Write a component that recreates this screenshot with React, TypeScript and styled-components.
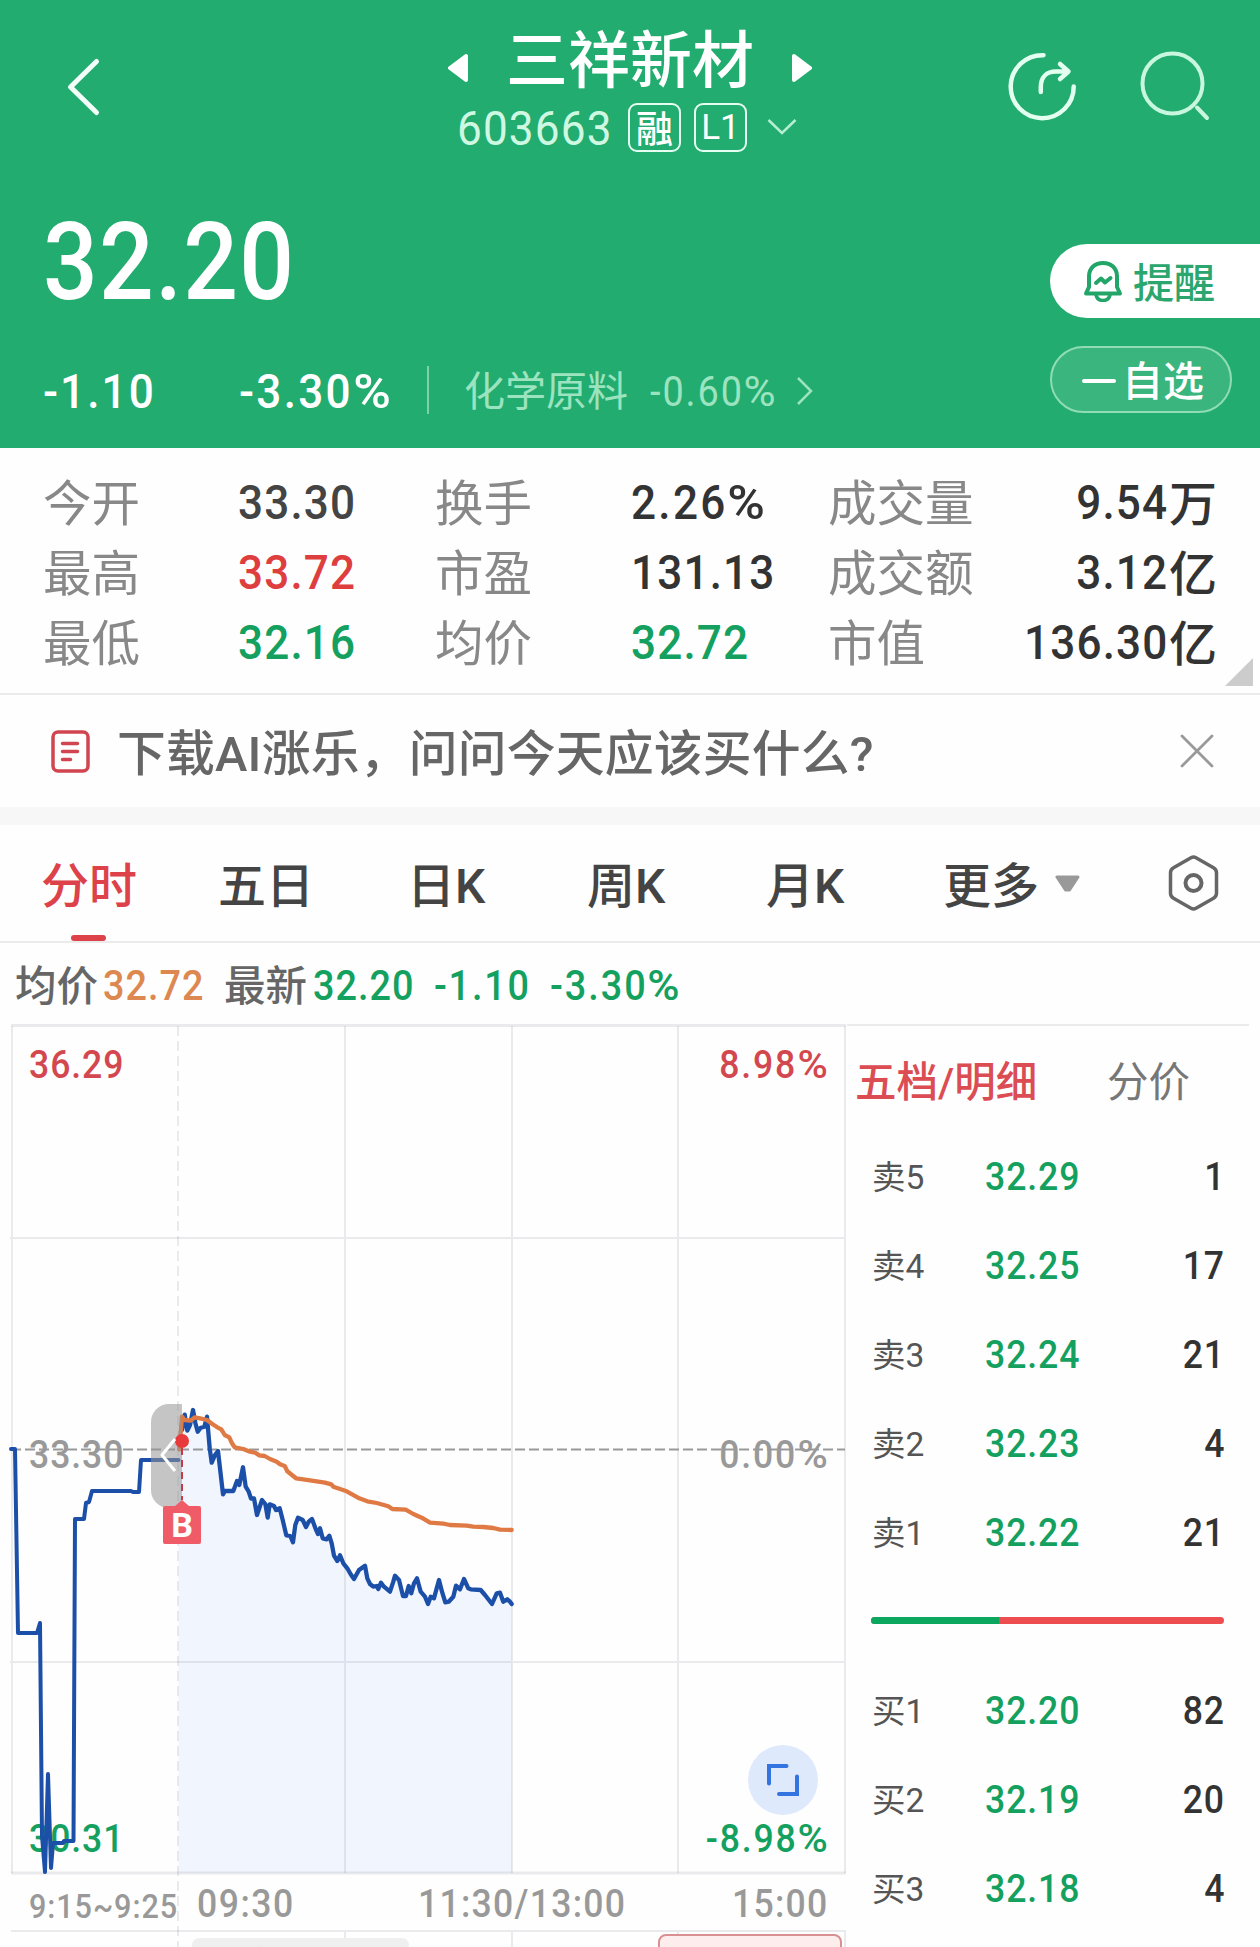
import React from "react";
import styled, { createGlobalStyle } from "styled-components";

const GREEN = "#14a05f";
const RED = "#dd4149";
const LINE = "#ebebeb";

const GlobalStyle = createGlobalStyle`
  *, *::before, *::after { box-sizing: border-box; }
  body {
    margin: 0;
    background: #fefefe;
    font-family: Roboto, "Noto Sans CJK SC", sans-serif;
    font-weight: 500;
  }
  svg { display: block; flex: none; }
`;

const Page = styled.main`
  width: 1260px;
  height: 1947px;
  overflow: hidden;
  display: flex;
  flex-direction: column;
  background: #fefefe;
  white-space: nowrap;
`;

/* Narrow, loosely tracked digits used for every quote figure. */
const Figure = styled.span<{ $track: number; $right?: boolean }>`
  display: inline-block;
  letter-spacing: ${(p) => p.$track}em;
  margin-right: ${(p) => (p.$right ? -p.$track : 0)}em;
  transform: scaleX(0.9);
  transform-origin: ${(p) => (p.$right ? "right" : "left")} center;
`;

const Percent = styled.span`
  display: inline-block;
  margin-right: 0.11em;
  transform: scaleX(1.16);
  transform-origin: left center;
`;

const trackOf = (text: string) => {
  if (text.includes("%")) return 0.052;
  return text.startsWith("-") ? 0.047 : 0.026;
};

const Num = ({ children, right, track }: { children: string; right?: boolean; track?: number }) => {
  const isPercent = children.endsWith("%");
  return (
    <Figure $track={track ?? trackOf(children)} $right={right}>
      {isPercent ? children.slice(0, -1) : children}
      {isPercent && <Percent>%</Percent>}
    </Figure>
  );
};

/* ---------- header ---------- */

const Header = styled.header`
  height: 448px;
  flex: none;
  background: #22ac6f;
  color: #fff;
`;

const TopBar = styled.div`
  height: 158px;
  padding: 20px 49px 0 66px;
  display: grid;
  grid-template-columns: 382px 364px 1fr;
`;

const BackButton = styled.div`
  padding-top: 37px;
`;

const TopActions = styled.div`
  display: flex;
  justify-content: flex-end;
  gap: 60px;
  padding-top: 30px;
`;

const TitleBlock = styled.div`
  display: flex;
  flex-direction: column;
`;

const TitleRow = styled.div`
  height: 78px;
  display: flex;
  align-items: center;
  justify-content: space-between;
  svg { margin-top: 18px; }
`;

const StockName = styled.h1`
  margin: 0;
  padding-top: 5px;
  font-size: 62px;
  line-height: 78px;
  font-weight: 500;
`;

const CodeRow = styled.div`
  height: 58px;
  display: flex;
  align-items: center;
  padding-left: 9px;
`;

const StockCode = styled.span`
  width: 171px;
  padding-top: 4px;
  font-size: 49px;
  font-weight: 400;
  line-height: 58px;
  color: #cff8e2;
`;

const Badge = styled.span<{ $size: number; $line: number; $light?: boolean }>`
  width: 53px;
  height: 49px;
  margin-right: 13px;
  border: 2px solid #e6fff3;
  border-radius: 9px;
  font-size: ${(p) => p.$size}px;
  font-weight: ${(p) => (p.$light ? 400 : 500)};
  line-height: ${(p) => p.$line}px;
  text-align: center;
`;

const CodeToggle = styled.span`
  padding-left: 7px;
`;

const HeaderBody = styled.div`
  display: flex;
  justify-content: space-between;
`;

const Quote = styled.div`
  padding: 50px 0 0 43px;
`;

const Price = styled.div`
  font-size: 107px;
  line-height: 110px;
`;

const ChangeRow = styled.div`
  height: 60px;
  margin-top: 43px;
  display: grid;
  grid-template-columns: 196px 188px 37px 186px 146px auto;
  align-items: center;
`;

const Change = styled.span`
  font-size: 49px;
  line-height: 60px;
`;

const Divider = styled.span`
  width: 2px;
  height: 48px;
  margin-top: -4px;
  background: #7dd1a9;
`;

const Sector = styled.span<{ $size: number }>`
  font-size: ${(p) => p.$size}px;
  line-height: 62px;
  font-weight: 400;
  color: #9ce3c0;
`;

const SectorArrow = styled.span`
  padding-bottom: 3px;
`;

const HeaderButtons = styled.div`
  padding-top: 86px;
  width: 210px;
  display: flex;
  flex-direction: column;
  gap: 28px;
`;

const ButtonText = styled.span`
  padding-top: 5px;
  font-size: 41px;
  line-height: 58px;
`;

const RemindButton = styled.div`
  height: 74px;
  padding-left: 33px;
  display: flex;
  align-items: center;
  gap: 10px;
  border-radius: 37px 0 0 37px;
  background: #fff;
  color: #2ba66e;
`;

const WatchButton = styled.div`
  width: 182px;
  height: 67px;
  padding-left: 30px;
  display: flex;
  align-items: center;
  gap: 6px;
  border: 2px solid #8fdcb6;
  border-radius: 34px;
  background: rgba(255, 255, 255, 0.11);
`;

const Minus = styled.span`
  width: 34px;
  height: 4px;
  margin-top: 3px;
  border-radius: 2px;
  background: #fff;
`;

/* ---------- statistics ---------- */

const Stats = styled.section`
  position: relative;
  height: 247px;
  flex: none;
  padding: 19px 43px 0 43px;
  display: grid;
  grid-template-columns: 195px 197px 196px 197px 150px 1fr;
  grid-auto-rows: 70px;
  border-bottom: 2px solid ${LINE};
`;

const StatLabel = styled.span`
  font-size: 48.5px;
  line-height: 75px;
  font-weight: 400;
  color: #888;
`;

const StatValue = styled.span<{ $color?: string; $right?: boolean }>`
  font-size: 49px;
  line-height: 72px;
  color: ${(p) => p.$color ?? "#333"};
  display: ${(p) => (p.$right ? "flex" : "block")};
  justify-content: flex-end;
`;

const Unit = styled.span`
  margin-left: 2px;
  font-size: 48px;
  line-height: 75px;
`;

const Corner = styled.span`
  position: absolute;
  right: 7px;
  bottom: 7px;
  width: 28px;
  height: 28px;
  background: #ccc;
  clip-path: polygon(100% 0, 100% 100%, 0 100%);
`;

/* ---------- notice ---------- */

const Notice = styled.section`
  height: 130px;
  flex: none;
  padding: 0 46px 0 51px;
  display: flex;
  align-items: center;
  border-bottom: 18px solid #f7f7f7;
`;

const NoticeText = styled.p`
  margin: 0 auto 0 27px;
  font-size: 48.8px;
  letter-spacing: 0.22px;
  line-height: 60px;
  padding-top: 8px;
  color: #666;
`;

/* ---------- tabs ---------- */

const Tabs = styled.nav`
  height: 118px;
  flex: none;
  padding: 0 41px;
  display: grid;
  grid-template-columns: 177px 189px 180px 179px 177px 225px 1fr;
  grid-template-rows: 116px;
  border-bottom: 2px solid ${LINE};
`;

const Tab = styled.div<{ $active?: boolean }>`
  position: relative;
  display: flex;
  align-items: center;
  gap: 16px;
  font-size: 48px;
  line-height: 60px;
  color: ${(p) => (p.$active ? RED : "#444")};
  &::after {
    content: "";
    display: ${(p) => (p.$active ? "block" : "none")};
    position: absolute;
    left: 30px;
    bottom: 0;
    width: 35px;
    height: 6px;
    border-radius: 3px;
    background: ${RED};
  }
`;

const TabText = styled.span`
  padding-top: 8px;
`;

/* ---------- legend above the chart ---------- */

const Legend = styled.div`
  height: 81px;
  flex: none;
  padding-left: 15px;
  display: grid;
  grid-template-columns: 88px 121px 89px 121px 116px auto;
`;

const LegendLabel = styled.span`
  font-size: 41.5px;
  line-height: 87px;
  color: #666;
`;

const LegendValue = styled.span<{ $color: string }>`
  font-size: 42px;
  line-height: 86px;
  color: ${(p) => p.$color};
`;

/* ---------- chart and order book ---------- */

const Market = styled.section`
  height: 923px;
  flex: none;
  display: grid;
  grid-template-columns: 847px 402px;
`;

const ChartPane = styled.div`
  position: relative;
`;

const Scale = styled.span<{ $top: number; $color: string; $right?: boolean }>`
  position: absolute;
  top: ${(p) => p.$top}px;
  ${(p) => (p.$right ? "right: 20px;" : "left: 29px;")}
  font-size: 39.5px;
  line-height: 40px;
  color: ${(p) => p.$color};
`;

const TimeAxis = styled.div`
  position: absolute;
  left: 29px;
  top: 852px;
  height: 56px;
  width: 800px;
  display: grid;
  grid-template-columns: 168px 221px 314px auto;
  line-height: 56px;
  color: #999;
`;

const TimeLabel = styled.span<{ $small?: boolean }>`
  font-size: ${(p) => (p.$small ? 34 : 39.5)}px;
  padding-top: ${(p) => (p.$small ? 2 : 0)}px;
`;

const ExpandButton = styled.div`
  position: absolute;
  left: 748px;
  top: 721px;
  width: 70px;
  height: 70px;
  border-radius: 50%;
  background: #dfe9fc;
  display: grid;
  place-items: center;
`;

const BuyMark = styled.div`
  position: absolute;
  left: 163px;
  top: 482px;
  width: 38px;
  height: 38px;
  border-radius: 2px;
  background: #ef5c68;
  color: #fff;
  font-size: 34px;
  font-weight: 700;
  line-height: 39px;
  text-align: center;
  &::before {
    content: "";
    position: absolute;
    left: 12px;
    top: -6px;
    border: 7px solid transparent;
    border-top: 0;
    border-bottom: 6px solid #ef5c68;
  }
`;

const IndicatorChip = styled.div`
  position: absolute;
  left: 192px;
  top: 914px;
  width: 217px;
  height: 60px;
  padding-left: 5px;
  border-radius: 7px;
  background: #efefef;
  color: #444;
  font-size: 41.5px;
  line-height: 62px;
`;

const AlertChip = styled.div`
  position: absolute;
  left: 658px;
  top: 910px;
  width: 184px;
  height: 60px;
  border: 2px solid #d99090;
  border-radius: 8px;
  background: #fdeeed;
`;

const Book = styled.aside`
  border-top: 2px solid ${LINE};
`;

const BookTabs = styled.div`
  height: 105px;
  padding: 5px 0 0 8px;
  display: grid;
  grid-template-columns: 252px auto;
  font-size: 41.5px;
  line-height: 103px;
`;

const BookTab = styled.span<{ $active?: boolean }>`
  color: ${(p) => (p.$active ? "#db4c53" : "#777")};
  font-weight: ${(p) => (p.$active ? 500 : 400)};
`;

const BookRow = styled.div`
  height: 89px;
  padding: 0 25px 0 25px;
  display: grid;
  grid-template-columns: 113px 130px 1fr;
  line-height: 91px;
`;

const Level = styled.span`
  font-size: 33.5px;
  line-height: 93px;
  font-weight: 400;
  color: #555;
`;

const BookPrice = styled.span`
  font-size: 39.5px;
  color: ${GREEN};
`;

const Volume = styled.span`
  font-size: 39.5px;
  text-align: right;
  color: #333;
`;

const RatioRow = styled.div`
  height: 89px;
  padding: 0 25px 0 24px;
  display: flex;
  align-items: center;
`;

const RatioBar = styled.div`
  flex: 1;
  height: 7px;
  border-radius: 4px;
  overflow: hidden;
  display: grid;
  grid-template-columns: 128px 1fr;
  background: #ee4d50;
  &::before { content: ""; background: #0ca75f; }
`;

/* ---------- data ---------- */

type Stat = { label: string; value: string; color?: string; unit?: string };

const stats: Stat[] = [
  { label: "今开", value: "33.30", color: "#444" },
  { label: "换手", value: "2.26%" },
  { label: "成交量", value: "9.54", unit: "万" },
  { label: "最高", value: "33.72", color: "#df3e3e" },
  { label: "市盈", value: "131.13" },
  { label: "成交额", value: "3.12", unit: "亿" },
  { label: "最低", value: "32.16", color: GREEN },
  { label: "均价", value: "32.72", color: GREEN },
  { label: "市值", value: "136.30", unit: "亿" },
];

const asks = [
  ["卖5", "32.29", "1"],
  ["卖4", "32.25", "17"],
  ["卖3", "32.24", "21"],
  ["卖2", "32.23", "4"],
  ["卖1", "32.22", "21"],
];

const bids = [
  ["买1", "32.20", "82"],
  ["买2", "32.19", "20"],
  ["买3", "32.18", "4"],
];

const auction =
  "11,425 15,425 18,609 37,609 40,599 42,812 45,848 48,750 51,844 53,819 63,819 64,817 73.5,817 75,495 84,495 86,479 89,478 92,467 131,467 133,468 139,468 141,436 178.5,436";

/* Session samples, in thirds of a pixel from the session origin. */
const session: number[][] = [
  [66,150],[74,104],[82,152],[90,135],[99,90],[106,128],[113,155],[122,143],[133,140],[141,110],[149,205],[155,248],
  [165,225],[174,213],[189,343],[195,333],[220,333],[231,303],[238,315],[249,262],[257,320],[266,335],[273,356],
  [282,355],[291,405],[306,360],[316,372],[323,413],[329,373],[342,378],[348,390],[359,385],[368,420],[379,466],
  [391,468],[399,487],[406,435],[414,413],[428,420],[438,441],[446,425],[456,417],[467,447],[474,462],[480,445],
  [488,475],[500,478],[508,467],[515,490],[522,527],[532,543],[540,526],[550,550],[562,565],[572,583],[582,597],
  [597,570],[615,557],[622,595],[630,612],[640,620],[650,618],[655,627],[663,608],[672,620],[690,635],[700,605],
  [705,587],[717,600],[729,648],[738,648],[746,618],[754,640],[762,610],[771,595],[782,635],[795,650],[804,672],
  [812,650],[822,655],[830,625],[837,600],[846,635],[856,667],[866,665],[880,650],[888,617],[900,628],[912,597],
  [925,625],[932,628],[962,630],[975,645],[996,672],[1010,640],[1020,638],[1030,665],[1042,658],[1050,665],[1055,672],
];

const average: number[][] = [
  [58,208],[66,110],[74,120],[92,122],[104,112],[124,116],[141,120],[158,133],[172,142],[184,148],[194,165],
  [208,172],[216,190],[224,202],[250,207],[270,215],[285,218],[298,226],[314,228],[330,237],[350,245],[360,253],
  [374,258],[382,274],[408,295],[430,298],[470,304],[495,308],[514,313],[520,320],[560,334],[598,355],[622,364],
  [650,369],[685,379],[697,387],[737,389],[760,402],[785,413],[810,428],[850,431],[870,435],[920,437],[940,440],
  [970,441],[1000,444],[1020,449],[1055,450],
];

const toPoints = (samples: number[][]) =>
  samples.map(([x, y]) => `${(160 + x / 3).toFixed(1)},${(356 + y / 3).toFixed(1)}`).join(" ");

/* ---------- drawings ---------- */

const BackIcon = () => (
  <svg width="36" height="60" viewBox="66 57 36 60" fill="none" stroke="#f4fff9" strokeWidth="5" strokeLinecap="round" strokeLinejoin="round">
    <path d="M96.5 61.5 70.500 87l26 25.500" />
  </svg>
);

const Triangle = ({ flip }: { flip?: boolean }) => (
  <svg width="20" height="30" viewBox="0 0 20 30" fill="#fff" stroke="#fff" strokeWidth="4" strokeLinejoin="round">
    <path d={flip ? "M2 3v24L18 15Z" : "M18 3v24L2 15Z"} />
  </svg>
);

const ShareIcon = () => (
  <svg width="72" height="72" viewBox="1007 50 72 72" fill="none" stroke="#e2fff0" strokeWidth="4.5" strokeLinecap="round" strokeLinejoin="round">
    <path d="M1043.500 55.200A31.500 31.500 0 1 0 1073.700 86.500" />
    <path d="M1040.800 92v-5c0-10 6-15.500 15-15.500h12M1060 64l8.500 7.500-8.500 7.500" />
  </svg>
);

const SearchIcon = () => (
  <svg width="72" height="72" viewBox="1139 50 72 72" fill="none" stroke="#c8f6de" strokeWidth="4" strokeLinecap="round">
    <circle cx="1172.500" cy="83.500" r="30" />
    <path d="m1197 107.500 10 10.500" />
  </svg>
);

const BellIcon = () => (
  <svg width="40" height="42" viewBox="0 0 40 42" fill="none" stroke="#22a568" strokeWidth="4" strokeLinejoin="round" strokeLinecap="round">
    <path d="M3 33.500 6 27V16.500C6 8 12 3 20 3s14 5 14 13.500V27l3 6.500Z" />
    <path d="M13 35c1 4 4 5.500 7 5.500s6-1.500 7-5.500" strokeWidth="3.500" />
    <path d="m13 23 5-4.500 4 4 5.500-4.500" />
  </svg>
);

const Chart = () => {
  const line = toPoints(session);
  return (
    <svg width="847" height="923" viewBox="0 0 847 923" fill="none">
      <polygon points={`178.500,440 ${line} 512,849 178.500,849`} fill="#f0f5fe" />
      <g stroke="rgba(60,60,80,0.1)" strokeWidth="2">
        <path d="M10 214H846M10 638H846M345 2V849M512 2V849M678 2V849M12 2V849M845 2V849" />
        <path d="M11 907H846M345 907V923M512 907V923M678 907V923M845 907V923" />
        <path d="M11 1.500H846M11 849H846" strokeWidth="3" />
        <path d="M178 2V923" strokeDasharray="10 5" />
      </g>
      <path d="M11 425.500H845" stroke="#999" strokeWidth="2" strokeDasharray="10 4" />
    </svg>
  );
};

const Overlay = styled.svg`
  position: absolute;
  left: 0;
  top: 0;
`;

const Lines = () => (
  <Overlay width="847" height="923" viewBox="0 0 847 923" fill="none" strokeLinejoin="round" strokeLinecap="round">
    <polyline points={auction} stroke="#1c50a8" strokeWidth="4" />
    <polyline points={toPoints(session)} stroke="#1c50a8" strokeWidth="4.300" />
    <polyline points={toPoints(average)} stroke="#e07a44" strokeWidth="4.300" />
    <path d="M182 380h-13a18 18 0 0 0-18 18v68a18 18 0 0 0 18 18h13Z" fill="rgba(150,150,150,0.55)" />
    <path d="M182 424v52" stroke="#c93a48" strokeWidth="2" strokeDasharray="7 5" strokeLinecap="butt" />
    <circle cx="182" cy="417" r="7" fill="#e8393b" />
    <path d="m175 415-13 16 13 16" stroke="#fff" strokeWidth="3" strokeLinecap="butt" />
  </Overlay>
);

const Row = ({ cells }: { cells: string[] }) => (
  <BookRow>
    <Level>{cells[0]}</Level>
    <BookPrice><Num>{cells[1]}</Num></BookPrice>
    <Volume><Num right>{cells[2]}</Num></Volume>
  </BookRow>
);

export default function App() {
  return (
    <Page>
      <GlobalStyle />
      <Header>
        <TopBar>
          <BackButton><BackIcon /></BackButton>
          <TitleBlock>
            <TitleRow>
              <Triangle />
              <StockName>三祥新材</StockName>
              <Triangle flip />
            </TitleRow>
            <CodeRow>
              <StockCode><Num>603663</Num></StockCode>
              <Badge $size={37} $line={51}>融</Badge>
              <Badge $size={35} $line={45} $light>L1</Badge>
              <CodeToggle>
                <svg width="30" height="18" viewBox="0 0 30 18" fill="none" stroke="#b5eed2" strokeWidth="2.500">
                  <path d="m1.500 2 13.500 13L28.500 2" />
                </svg>
              </CodeToggle>
            </CodeRow>
          </TitleBlock>
          <TopActions>
            <ShareIcon />
            <SearchIcon />
          </TopActions>
        </TopBar>
        <HeaderBody>
          <Quote>
            <Price><Num track={0.014}>32.20</Num></Price>
            <ChangeRow>
              <Change><Num>-1.10</Num></Change>
              <Change><Num>-3.30%</Num></Change>
              <Divider />
              <Sector $size={41}>化学原料</Sector>
              <Sector $size={42}><Num>-0.60%</Num></Sector>
              <SectorArrow>
                <svg width="18" height="30" viewBox="0 0 18 30" fill="none" stroke="#9ce3c0" strokeWidth="2.500">
                  <path d="m2 2 13 13L2 28" />
                </svg>
              </SectorArrow>
            </ChangeRow>
          </Quote>
          <HeaderButtons>
            <RemindButton><BellIcon /><ButtonText>提醒</ButtonText></RemindButton>
            <WatchButton><Minus /><ButtonText>自选</ButtonText></WatchButton>
          </HeaderButtons>
        </HeaderBody>
      </Header>

      <Stats>
        {stats.map((s) => (
          <React.Fragment key={s.label}>
            <StatLabel>{s.label}</StatLabel>
            <StatValue $color={s.color} $right={!!s.unit}>
              <Num right={!!s.unit}>{s.value}</Num>
              {s.unit && <Unit>{s.unit}</Unit>}
            </StatValue>
          </React.Fragment>
        ))}
        <Corner />
      </Stats>

      <Notice>
        <svg width="39" height="43" viewBox="0 0 39 43" fill="none" stroke="#d0454f" strokeWidth="3.500" strokeLinecap="round">
          <rect x="2" y="2" width="35" height="39" rx="5" />
          <path d="M11.500 13.500h15M11.500 21.500h15M11.500 29.500h8" />
        </svg>
        <NoticeText>下载AI涨乐，问问今天应该买什么?</NoticeText>
        <svg width="34" height="34" viewBox="0 0 34 34" stroke="#999" strokeWidth="2.800" strokeLinecap="round">
          <path d="m2 2 30 30M32 2 2 32" />
        </svg>
      </Notice>

      <Tabs>
        <Tab $active><TabText>分时</TabText></Tab>
        <Tab><TabText>五日</TabText></Tab>
        <Tab><TabText>日K</TabText></Tab>
        <Tab><TabText>周K</TabText></Tab>
        <Tab><TabText>月K</TabText></Tab>
        <Tab>
          <TabText>更多</TabText>
          <svg width="25" height="17" viewBox="0 0 25 17" fill="#999" stroke="#999" strokeWidth="3" strokeLinejoin="round">
            <path d="M2 2h21l-8.500 13h-4Z" />
          </svg>
        </Tab>
        <Tab>
          <svg width="51" height="56" viewBox="0 0 51 56" fill="none" stroke="#666" strokeWidth="3.500" strokeLinejoin="round">
            <path d="M23 2.800q2.500-1.400 5 0l17.500 10q3 1.700 3 5v20.400q0 3.300-3 5l-17.500 10q-2.500 1.400-5 0l-17.500-10q-3-1.700-3-5V17.800q0-3.300 3-5Z" />
            <circle cx="25.500" cy="28" r="8" strokeWidth="4" />
          </svg>
        </Tab>
      </Tabs>

      <Legend>
        <LegendLabel>均价</LegendLabel>
        <LegendValue $color="#dc8850"><Num>32.72</Num></LegendValue>
        <LegendLabel>最新</LegendLabel>
        <LegendValue $color={GREEN}><Num>32.20</Num></LegendValue>
        <LegendValue $color={GREEN}><Num>-1.10</Num></LegendValue>
        <LegendValue $color={GREEN}><Num>-3.30%</Num></LegendValue>
      </Legend>

      <Market>
        <ChartPane>
          <Chart />
          <Scale $top={21} $color="#d3474f"><Num>36.29</Num></Scale>
          <Scale $top={21} $color="#d3474f" $right><Num right>8.98%</Num></Scale>
          <Scale $top={411} $color="#999"><Num>33.30</Num></Scale>
          <Scale $top={411} $color="#999" $right><Num right>0.00%</Num></Scale>
          <Scale $top={795} $color={GREEN}><Num>30.31</Num></Scale>
          <Scale $top={795} $color={GREEN} $right><Num right>-8.98%</Num></Scale>
          <Lines />
          <BuyMark>B</BuyMark>
          <ExpandButton>
            <svg width="34" height="34" viewBox="0 0 34 34" fill="none" stroke="#3474e0" strokeWidth="4" strokeLinecap="round">
              <path d="M3 20.500V3H20.500M31 13.500V31H13" />
            </svg>
          </ExpandButton>
          <TimeAxis>
            <TimeLabel $small><Num track={0.03}>9:15~9:25</Num></TimeLabel>
            <TimeLabel><Num track={0.042}>09:30</Num></TimeLabel>
            <TimeLabel><Num track={0.036}>11:30/13:00</Num></TimeLabel>
            <TimeLabel><Num track={0.036}>15:00</Num></TimeLabel>
          </TimeAxis>
          <IndicatorChip>成交额</IndicatorChip>
          <AlertChip />
        </ChartPane>
        <Book>
          <BookTabs>
            <BookTab $active>五档/明细</BookTab>
            <BookTab>分价</BookTab>
          </BookTabs>
          {asks.map((c) => <Row key={c[0]} cells={c} />)}
          <RatioRow><RatioBar /></RatioRow>
          {bids.map((c) => <Row key={c[0]} cells={c} />)}
        </Book>
      </Market>
    </Page>
  );
}
